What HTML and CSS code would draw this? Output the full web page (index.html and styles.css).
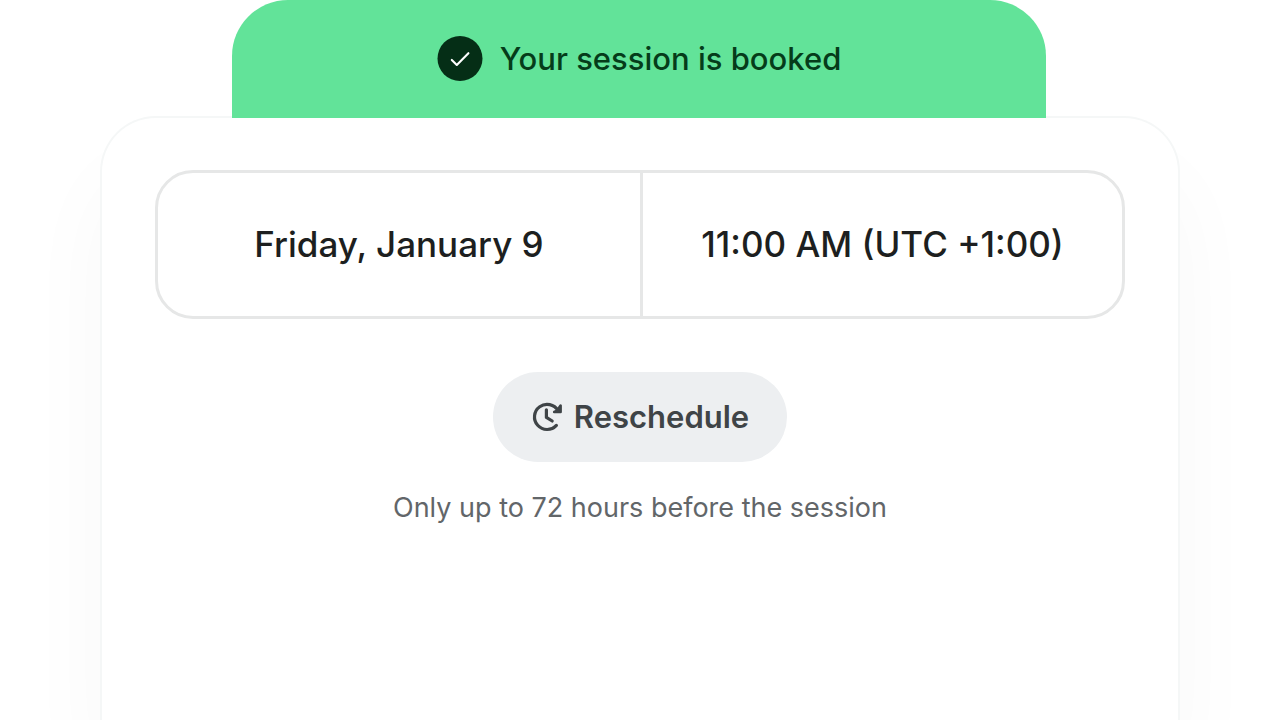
FILE: index.html
```html
<!DOCTYPE html>
<html lang="en">
<head>
  <meta charset="utf-8">
  <meta name="viewport" content="width=device-width, initial-scale=1">
  <title>Your session is booked</title>
  <link rel="stylesheet" href="styles.css">
</head>
<body>
  <main class="booking">
    <header class="banner">
      <svg class="banner-icon" viewBox="0 0 46 46" aria-hidden="true">
        <circle cx="23" cy="22.5" r="22.5" fill="#052e16"/>
        <path d="M14.8 23.9l5 5L31.4 17.2" fill="none" stroke="#fff" stroke-width="2.1" stroke-linecap="round" stroke-linejoin="round"/>
      </svg>
      <h1>Your session is booked</h1>
    </header>

    <section class="card">
      <div class="slot">
        <div class="slot-cell">Friday, January 9</div>
        <div class="slot-cell">11:00 AM (UTC +1:00)</div>
      </div>

      <button type="button" class="reschedule">
        <svg class="reschedule-icon" viewBox="0 0 32 32" fill="none" stroke="currentColor" stroke-width="3.2" stroke-linecap="round" stroke-linejoin="round" aria-hidden="true">
          <path d="M25.4 24.4A12.6 12.6 0 1 1 27 9.6"/>
          <path d="M15.4 8.8V16.4l5.8 3.6"/>
          <path d="M29.6 4.6v6.4h-6.4l3-1.4z" fill="currentColor" stroke-width="2.6"/>
        </svg>
        Reschedule
      </button>

      <p class="note">Only up to 72 hours before the session</p>
    </section>
  </main>
</body>
</html>
```

FILE: styles.css
```css
* {
  box-sizing: border-box;
}
body {
  margin: 0;
  background: #fff;
  color: #1d1f20;
  font-family: Inter, "Liberation Sans", sans-serif;
}
.booking {
  display: flex;
  flex-direction: column;
  min-height: 100vh;
  padding: 0 100px;
  overflow: hidden;
}

/* green strip tucked onto the card's top edge */
.banner {
  position: relative;
  z-index: 1;
  display: flex;
  align-items: center;
  justify-content: center;
  gap: 17px;
  height: 118px;
  margin: 0 134px -2px 132px;
  border-radius: 56px 56px 0 0;
  background: #62e399;
  color: #053c1a;
}
.banner-icon {
  width: 46px;
  height: 46px;
}
h1 {
  margin: 0;
  font-size: 31px;
  font-weight: 500;
  line-height: 40px;
}

.card {
  flex: 1;
  display: flex;
  flex-direction: column;
  align-items: center;
  padding: 52px 53px;
  border: 2px solid #f5f7f7;
  border-bottom: 0;
  border-radius: 56px 56px 0 0;
  background: #fff;
  box-shadow: 0 60px 90px rgba(0, 0, 0, 0.03);
}
.slot {
  display: grid;
  grid-template-columns: 1fr 1fr;
  width: 100%;
  border: 3px solid #e6e7e7;
  border-radius: 38px;
}
.slot-cell {
  padding: 49px 16px;
  font-size: 35px;
  font-weight: 500;
  line-height: 45px;
  text-align: center;
}
.slot-cell + .slot-cell {
  border-left: 3px solid #e6e7e7;
}

.reschedule {
  display: flex;
  align-items: center;
  gap: 11px;
  height: 90px;
  margin-top: 53px;
  padding: 0 38px;
  border: 0;
  border-radius: 45px;
  background: #edeff1;
  color: #3f4447;
  font: 600 31px/40px Inter, "Liberation Sans", sans-serif;
  cursor: pointer;
}
.reschedule-icon {
  width: 32px;
  height: 32px;
}
.note {
  margin: 30px 0 0;
  color: #626669;
  font-size: 27px;
  line-height: 32px;
}
```
